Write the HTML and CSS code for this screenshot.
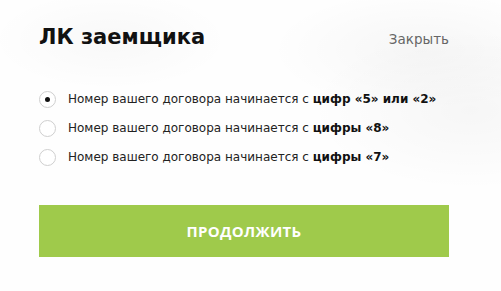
FILE: index.html
```html
<!DOCTYPE html>
<html lang="ru">
<head>
<meta charset="utf-8">
<link rel="stylesheet" href="styles.css">
</head>
<body>
<div class="modal">
  <div class="header">
    <h1 class="title">ЛК заемщика</h1>
    <a class="close">Закрыть</a>
  </div>
  <div class="options">
    <label class="option"><span class="radio checked"></span><span class="text">Номер вашего договора начинается с <b>цифр «5» или «2»</b></span></label>
    <label class="option"><span class="radio"></span><span class="text">Номер вашего договора начинается с <b>цифры «8»</b></span></label>
    <label class="option"><span class="radio"></span><span class="text">Номер вашего договора начинается с <b>цифры «7»</b></span></label>
  </div>
  <button class="btn">ПРОДОЛЖИТЬ</button>
</div>
</body>
</html>
```
FILE: styles.css
```css
html, body {
  margin: 0;
  padding: 0;
}
body {
  width: 501px;
  height: 291px;
  overflow: hidden;
  background:
    radial-gradient(ellipse 120px 50px at 110px 40px, rgba(0,0,0,0.025), transparent),
    radial-gradient(ellipse 150px 60px at 420px 50px, rgba(0,0,0,0.03), transparent),
    radial-gradient(ellipse 160px 80px at 470px 110px, rgba(0,0,0,0.03), transparent),
    #fefefe;
  font-family: "DejaVu Sans", sans-serif;
}
.modal {
  padding: 23px 52px 0 39px;
  display: flex;
  flex-direction: column;
}
.header {
  display: flex;
  justify-content: space-between;
  align-items: baseline;
}
.title {
  margin: 0;
  font-size: 21px;
  line-height: 28px;
  font-weight: 700;
  color: #111;
}
.close {
  font-size: 13.5px;
  line-height: 28px;
  color: #666;
}
.options {
  margin-top: 37px;
  display: flex;
  flex-direction: column;
  gap: 11px;
}
.option {
  display: flex;
  align-items: center;
  gap: 12px;
  height: 18px;
  line-height: 18px;
  font-size: 12px;
  color: #222;
}
.option b {
  font-weight: 700;
  color: #111;
}
.radio {
  width: 15px;
  height: 15px;
  border: 1px solid #cfcfcf;
  border-radius: 50%;
  background: #fff;
  display: flex;
  align-items: center;
  justify-content: center;
  flex: none;
}
.radio.checked::after {
  content: "";
  width: 5px;
  height: 5px;
  border-radius: 50%;
  background: #111;
}
.btn {
  margin-top: 39px;
  width: 410px;
  height: 52px;
  border: 0;
  background: #9fca4b;
  color: #fff;
  font-family: "Open Sans", sans-serif;
  font-weight: 700;
  font-size: 15px;
  letter-spacing: 0.3px;
  padding: 0;
}
```
